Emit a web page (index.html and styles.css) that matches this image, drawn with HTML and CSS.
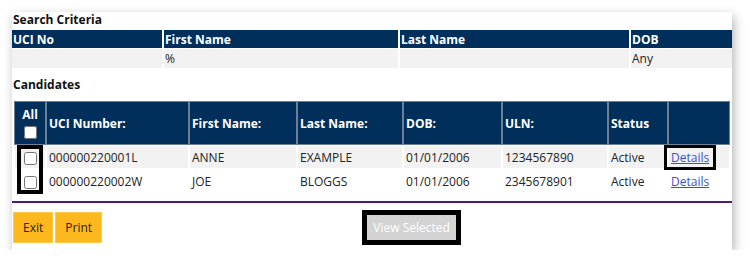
FILE: index.html
```html
<!DOCTYPE html>
<html lang="en">
<head>
    <meta charset="UTF-8">
    <title>Candidate Search</title>
    <link rel="stylesheet" href="styles.css">
</head>
<body>
    <div class="panel">
        <h2 class="titulo">Search Criteria</h2>
        <table class="criterios">
            <tr>
                <th class="c-uci">UCI No</th>
                <th class="c-first">First Name</th>
                <th class="c-last">Last Name</th>
                <th class="c-dob">DOB</th>
            </tr>
            <tr>
                <td></td>
                <td>%</td>
                <td></td>
                <td class="c-dob">Any</td>
            </tr>
        </table>

        <h2 class="titulo candidatos">Candidates</h2>
        <div class="tabla-wrap">
            <table class="resultados">
                <tr>
                    <th class="k-all">All<br><input type="checkbox" class="check"></th>
                    <th class="k-uci">UCI Number:</th>
                    <th class="k-first">First Name:</th>
                    <th class="k-last">Last Name:</th>
                    <th class="k-dob">DOB:</th>
                    <th class="k-uln">ULN:</th>
                    <th class="k-status">Status</th>
                    <th class="k-link"></th>
                </tr>
                <tr class="par">
                    <td class="centro"><input type="checkbox" class="check"></td>
                    <td>000000220001L</td>
                    <td>ANNE</td>
                    <td>EXAMPLE</td>
                    <td>01/01/2006</td>
                    <td>1234567890</td>
                    <td>Active</td>
                    <td><a href="#" class="detalle marca">Details</a></td>
                </tr>
                <tr>
                    <td class="centro"><input type="checkbox" class="check"></td>
                    <td>000000220002W</td>
                    <td>JOE</td>
                    <td>BLOGGS</td>
                    <td>01/01/2006</td>
                    <td>2345678901</td>
                    <td>Active</td>
                    <td><a href="#" class="detalle">Details</a></td>
                </tr>
            </table>
            <div class="marca-checks"></div>
        </div>

        <div class="pie">
            <button class="boton amarillo">Exit</button>
            <button class="boton amarillo">Print</button>
            <button class="boton ver" disabled>View Selected</button>
        </div>
    </div>
</body>
</html>
```

FILE: styles.css
```css
body{
    margin: 0;
    background-color: #fff;
    font-family: "Open Sans", "Noto Sans", sans-serif;
    font-size: 12px;
    color: #222;
}
.panel{
    margin: 12px 0 0 12px;
    width: 720px;
    height: 238px;
    background-color: #fff;
    box-shadow: 2px 4px 10px rgba(0, 0, 0, 0.3);
}
.titulo{
    margin: 0;
    padding-left: 1px;
    height: 18px;
    line-height: 16px;
    font-size: 12px;
    font-weight: bold;
    color: #111;
}
.candidatos{
    height: 32px;
    padding-top: 8px;
    line-height: 18px;
    box-sizing: border-box;
}
/* Tabla de criterios */
.criterios{
    width: 720px;
    border-collapse: separate;
    border-spacing: 0;
    table-layout: fixed;
}
.criterios th, .criterios td{
    box-sizing: border-box;
    padding: 0 0 0 1px;
    text-align: left;
    border-right: 2px solid #fff;
}
.criterios th{
    height: 19px;
    background-color: #012f5b;
    color: #fff;
    border-bottom: 1px solid #fff;
}
.criterios td{
    height: 19px;
    background-color: #f2f2f2;
}
.c-uci{ width: 152px; }
.c-first{ width: 236px; }
.c-last{ width: 231px; }
.c-dob{ width: 101px; }
.criterios .c-dob{ border-right: none; }
/* Tabla de candidatos */
.tabla-wrap{
    position: relative;
    padding: 0 1px;
}
.resultados{
    width: 718px;
    table-layout: fixed;
    border-collapse: separate;
    border-spacing: 2px 2px;
}
.resultados th, .resultados td{
    box-sizing: border-box;
    padding: 0 0 0 2px;
    text-align: left;
}
.resultados th{
    height: 42px;
    background-color: #012f5b;
    color: #fff;
    outline: 1px solid #6d7f95;
}
.resultados td{
    height: 22px;
}
.par td{
    background-color: #f2f2f2;
}
.k-all{ width: 30px; }
.k-uci{ width: 141px; }
.k-first{ width: 106px; }
.k-last{ width: 104px; }
.k-dob{ width: 97px; }
.k-uln{ width: 104px; }
.k-status{ width: 58px; }
.k-link{ width: 60px; }
.resultados .k-all, .resultados .centro{
    text-align: center;
    padding: 0;
}
.check{
    margin: 0;
    width: 13px;
    height: 13px;
    vertical-align: middle;
}
.detalle{
    color: #3a50d4;
}
.marca{
    position: relative;
}
.marca::after{
    content: '';
    position: absolute;
    top: -4px; bottom: -4px;
    left: -7px; right: -7px;
    border: 3px solid #000;
}
.marca-checks{
    position: absolute;
    left: 5px; top: 45px;
    width: 26px; height: 49px;
    box-sizing: border-box;
    border: 4px solid #000;
}
/* Botones */
.pie{
    margin-top: 7px;
    border-top: 2px solid #4a1a7a;
    display: flex;
    align-items: center;
    gap: 2px;
    padding: 7px 0 0 1px;
}
.boton{
    font-family: "Open Sans", "Noto Sans", sans-serif;
    font-size: 12px;
    border: none;
    padding: 0;
}
.amarillo{
    height: 31px;
    padding: 0 9px;
    background-color: #fdb81e;
    border: 1px solid #fcc94a;
    color: #222;
}
.ver{
    margin-left: 258px;
    width: 99px;
    height: 35px;
    background-color: #d3d3d3;
    color: #fff;
    border: 5px solid #000;
}
```
